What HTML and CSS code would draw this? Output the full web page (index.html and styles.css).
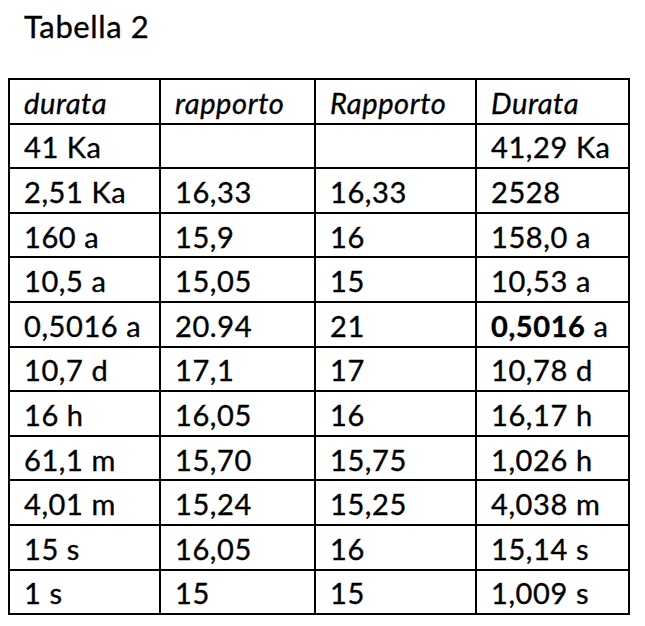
FILE: index.html
```html
<!DOCTYPE html>
<html lang="it">
<head>
<meta charset="utf-8">
<title>Tabella 2</title>
<link rel="stylesheet" href="styles.css">
</head>
<body>
<div class="page">
  <h1 class="title">Tabella 2</h1>
  <table class="data">
    <colgroup>
      <col class="c1"><col class="c2"><col class="c3"><col class="c4">
    </colgroup>
    <thead>
      <tr><th>durata</th><th>rapporto</th><th>Rapporto</th><th>Durata</th></tr>
    </thead>
    <tbody>
      <tr><td>41 Ka</td><td></td><td></td><td>41,29 Ka</td></tr>
      <tr><td>2,51 Ka</td><td>16,33</td><td>16,33</td><td>2528</td></tr>
      <tr><td>160 a</td><td>15,9</td><td>16</td><td>158,0 a</td></tr>
      <tr><td>10,5 a</td><td>15,05</td><td>15</td><td>10,53 a</td></tr>
      <tr><td>0,5016 a</td><td>20.94</td><td>21</td><td><b>0,5016</b> a</td></tr>
      <tr><td>10,7 d</td><td>17,1</td><td>17</td><td>10,78 d</td></tr>
      <tr><td>16 h</td><td>16,05</td><td>16</td><td>16,17 h</td></tr>
      <tr><td>61,1 m</td><td>15,70</td><td>15,75</td><td>1,026 h</td></tr>
      <tr><td>4,01 m</td><td>15,24</td><td>15,25</td><td>4,038 m</td></tr>
      <tr><td>15 s</td><td>16,05</td><td>16</td><td>15,14 s</td></tr>
      <tr><td>1 s</td><td>15</td><td>15</td><td>1,009 s</td></tr>
    </tbody>
  </table>
</div>
</body>
</html>
```
FILE: styles.css
```css
html, body {
  margin: 0;
  padding: 0;
  background: #fff;
}
.page {
  padding: 0 0 0 8px;
  font-family: Lato, "Liberation Sans", sans-serif;
  color: #000;
  -webkit-text-stroke: 0.35px #000;
}
.title {
  margin: 0;
  padding: 7px 0 0 16px;
  height: 78px;
  box-sizing: border-box;
  font-size: 31px;
  font-weight: 400;
  line-height: 38px;
  letter-spacing: 0.6px;
}
.data {
  border-collapse: collapse;
  table-layout: fixed;
  width: 620px;
  font-size: 29px;
  letter-spacing: 0.6px;
}
.c1 { width: 151px; }
.c2 { width: 155px; }
.c3 { width: 161px; }
.c4 { width: 153px; }
.data th,
.data td {
  border: 2px solid #000;
  height: 44.6px;
  box-sizing: border-box;
  padding: 2px 0 0 14px;
  text-align: left;
  vertical-align: middle;
  white-space: nowrap;
  line-height: 1;
}
.data th {
  font-style: italic;
  font-weight: 400;
}
.data b {
  font-weight: 700;
}
```
